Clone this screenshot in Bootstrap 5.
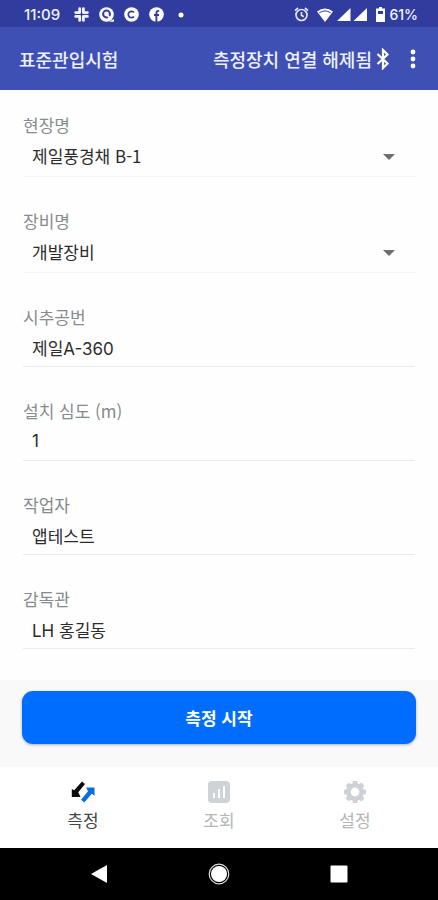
<!DOCTYPE html>
<html lang="ko">
<head>
<meta charset="utf-8">
<meta name="viewport" content="width=device-width, initial-scale=1">
<title>표준관입시험</title>
<link href="https://cdn.jsdelivr.net/npm/bootstrap@5.3.0/dist/css/bootstrap.min.css" rel="stylesheet">
<style>
  body { font-family: "Noto Sans CJK KR", sans-serif; font-size: 17px; line-height: 24px; background: #fefefe; color: #2b2b2b; }
  svg { display: block; flex: none; }
  .status { background: #303c9e; color: #f1f3ff; height: 27px; font-family: Inter, sans-serif; font-size: 15px; font-weight: 500; line-height: 20px; padding: 2px 20px 0 24px; }
  .status-icons { gap: 10px; }
  .battery-level { font-size: 14px; }
  .appbar { background: #3f50b5; color: #eef0fc; height: 63px; padding: 0 18px 0 19px; font-size: 18px; font-weight: 500; }
  .appbar h1 { font-size: 18px; font-weight: 500; line-height: 24px; }
  .icon-button { background: none; border: 0; color: inherit; padding: 0; }
  .fields { padding: 23px 23px 31px; gap: 32px; }
  .field-label { color: #868b8e; display: block; margin: 0; }
  .form-control.line-input, .form-select.line-input {
    border: 0; border-bottom: 1px solid #e9ebec; border-radius: 0; background-color: transparent;
    font-size: 17px; line-height: 24px; color: #2b2b2b; padding: 6px 9px 7px; height: 38px;
  }
  .form-control.line-input { font-family: Inter, "Noto Sans CJK KR", sans-serif; }
  .form-select.line-input {
    height: 40px; border-bottom-color: #f3f4f4; padding-right: 40px;
    background-image: url("data:image/svg+xml,%3Csvg xmlns='http://www.w3.org/2000/svg' viewBox='0 0 12 6'%3E%3Cpath d='M0 0h12L6 6z' fill='%236d6d6d'/%3E%3C/svg%3E");
    background-size: 12px 6px; background-position: right 20px center;
  }
  .action { background: #f9f9f9; padding: 11px 22px 23px; }
  .btn.start { --bs-btn-bg: #006dff; --bs-btn-color: #fff; --bs-btn-hover-bg: #0062e6; --bs-btn-hover-color: #fff; --bs-btn-border-width: 0; --bs-btn-border-radius: 11px;
    font-size: 17px; font-weight: 700; line-height: 24px; height: 53px; box-shadow: 0 1px 3px rgba(0,0,0,.3); }
  .tabs { background: #fff; height: 81px; padding: 0 15px; }
  .tabs a { color: #b3b5b7; gap: 4px; padding-top: 13px; }
  .tabs a.current { color: #444; }
  .sysbar { background: #000; min-height: 52px; padding: 0 40px; color: #fff; }
</style>
<script src="https://cdn.jsdelivr.net/npm/bootstrap@5.3.0/dist/js/bootstrap.bundle.min.js"></script>
</head>
<body class="d-flex flex-column min-vh-100">
<div class="status d-flex align-items-center justify-content-between">
  <div class="status-icons d-flex align-items-center">
    <span class="me-1">11:09</span>
    <svg width="15" height="15" viewBox="0 0 15 15" fill="none" stroke="#f1f3ff" stroke-width="2.8" stroke-linecap="round"><path d="M5.700 1.600v3.500M1.700 5.600h4M9.400 1.600v4M9.600 5.600h3.800M5.700 9.400v4M1.700 9.400h3.800M9.400 9.600v3.800M9.400 9.400h4"/></svg>
    <svg width="15" height="15" viewBox="0 0 15 15"><circle cx="7.5" cy="7.5" r="7.3" fill="#fff"/><circle cx="7.5" cy="7" r="3.4" fill="none" stroke="#303c9e" stroke-width="2"/><path d="M8 7.500l3.500 4.500" stroke="#fff" stroke-width="2"/><path d="M10 14.8h5V12" fill="#fff"/></svg>
    <svg width="15" height="15" viewBox="0 0 15 15"><circle cx="7.5" cy="7.5" r="7.3" fill="#fff"/><path d="M10 5.500A3.200 3.200 0 1 0 10 9.500" fill="none" stroke="#303c9e" stroke-width="1.7"/></svg>
    <svg width="15" height="15" viewBox="0 0 15 15"><circle cx="7.5" cy="7.5" r="7.3" fill="#fff"/><path d="M7.4 15V6.2c0-1.800.9-2.500 2.800-2.300M5 8h5" fill="none" stroke="#303c9e" stroke-width="1.9"/></svg>
    <svg class="ms-1" width="6" height="6" viewBox="0 0 6 6"><circle cx="3" cy="3" r="2.500" fill="#fff"/></svg>
  </div>
  <div class="d-flex align-items-center">
    <svg class="me-2" width="15" height="15" viewBox="0 0 15 15" fill="none" stroke="#e4e7fb" stroke-width="1.700"><circle cx="7.500" cy="8" r="5.500"/><path d="M7.500 5v3.300l2.200 1.500M1 3.600L4 1M14 3.600L11 1"/></svg>
    <svg width="16" height="14" viewBox="0 0 16 14"><path d="M0 3.500Q8-2.500 16 3.500L8 14z" fill="#fff"/><path d="M2.300 4.800Q8 1 13.700 4.800" fill="none" stroke="#303c9e" stroke-width="1"/></svg>
    <svg class="ms-1" width="31" height="13" viewBox="0 0 31 13" fill="#fff"><path d="M0 13L13.500 0v13zM16.500 13L30 0v13z"/></svg>
    <svg class="ms-2 me-1" width="9" height="15" viewBox="0 0 9 15"><path d="M3 0h3v1.500h3V15H0V1.500h3z" fill="#fff"/><path d="M2 4h5v3H2z" fill="#303c9e"/></svg>
    <span class="battery-level">61%</span>
  </div>
</div>

<header class="appbar d-flex align-items-center">
  <h1 class="m-0 me-auto">표준관입시험</h1>
  <span>측정장치 연결 해제됨</span>
  <svg class="ms-1" width="14" height="22" viewBox="0 0 14 22" fill="none" stroke="#fff" stroke-width="2.2"><path d="M1.500 6l10 9.500-4.500 4.500V2l4.500 4.500-10 9.500"/></svg>
  <button class="icon-button ms-3" type="button" aria-label="메뉴">
    <svg width="14" height="20" viewBox="0 0 14 20" fill="#fff"><circle cx="7" cy="3" r="2.400"/><circle cx="7" cy="10" r="2.400"/><circle cx="7" cy="17" r="2.400"/></svg>
  </button>
</header>

<main class="d-flex flex-column flex-grow-1">
  <form class="fields d-flex flex-column flex-grow-1" id="test-form">
    <div><label class="field-label" for="site">현장명</label>
      <select class="form-select line-input" id="site"><option>제일풍경채 B-1</option></select></div>
    <div><label class="field-label" for="device">장비명</label>
      <select class="form-select line-input" id="device"><option>개발장비</option></select></div>
    <div><label class="field-label" for="hole">시추공번</label>
      <input class="form-control line-input" id="hole" value="제일A-360"></div>
    <div><label class="field-label" for="depth">설치 심도 (m)</label>
      <input class="form-control line-input" id="depth" value="1"></div>
    <div><label class="field-label" for="worker">작업자</label>
      <input class="form-control line-input" id="worker" value="앱테스트"></div>
    <div><label class="field-label" for="supervisor">감독관</label>
      <input class="form-control line-input" id="supervisor" value="LH 홍길동"></div>
  </form>
  <div class="action">
    <button class="btn start w-100" type="submit" form="test-form">측정 시작</button>
  </div>
</main>

<nav class="tabs d-flex">
  <a class="current d-flex flex-column align-items-center text-decoration-none w-100" href="#measure">
    <svg width="24" height="24" viewBox="0 0 24 24"><path d="M11 1.500l3 2.600L7.300 12.300l2.200 4.700H.8V9l2.400 1.300z" fill="#0b0b0d"/><path d="M13.300 22.500L10 19.800l7-8.500-1.800-3.800h8.300v8.200l-2.700-2z" fill="#0b6be0"/></svg>
    <span>측정</span></a>
  <a class="d-flex flex-column align-items-center text-decoration-none w-100" href="#lookup">
    <svg width="24" height="24" viewBox="0 0 24 24"><rect x="1" y="1" width="22" height="22" rx="4" fill="#cfd2d7"/><path d="M7 18v-5M12 18V9M17 18V6" stroke="#fff" stroke-width="2"/></svg>
    <span>조회</span></a>
  <a class="d-flex flex-column align-items-center text-decoration-none w-100" href="#settings">
    <svg width="24" height="24" viewBox="0 0 24 24" fill="none" stroke="#cdd0d4"><circle cx="12" cy="12" r="6.700" stroke-width="4.600"/><path d="M12 1v4M12 19v4M1 12h4M19 12h4M4.200 4.200L7 7M17 17l2.800 2.800M4.200 19.800L7 17M17 7l2.800-2.800" stroke-width="4.600"/></svg>
    <span>설정</span></a>
</nav>

<div class="sysbar d-flex justify-content-around align-items-center">
  <button class="icon-button" type="button" aria-label="뒤로"><svg width="18" height="20" viewBox="0 0 18 20"><path d="M1 10L17 1v18z" fill="#fff"/></svg></button>
  <button class="icon-button" type="button" aria-label="홈"><svg width="22" height="22" viewBox="0 0 22 22"><circle cx="11" cy="11" r="9.800" fill="none" stroke="#ddd" stroke-width="1.200"/><circle cx="11" cy="11" r="8" fill="#fff"/></svg></button>
  <button class="icon-button" type="button" aria-label="최근 앱"><svg width="18" height="18" viewBox="0 0 18 18"><rect x=".5" y=".5" width="17" height="17" rx="1" fill="#fff"/></svg></button>
</div>
</body>
</html>
